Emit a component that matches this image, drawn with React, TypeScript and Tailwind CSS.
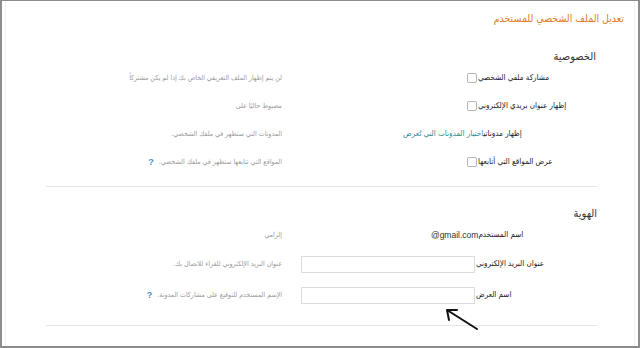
import React from 'react';

const font = { fontFamily: '"Liberation Sans", "DejaVu Sans Condensed", "DejaVu Sans", sans-serif' };

function Checkbox() {
  return (
    <span className="inline-block h-[10px] w-[10px] shrink-0 rounded-[2px] border border-[#b5b5b5] bg-white" />
  );
}

function Help() {
  return (
    <span className="inline-block text-[9px] font-bold leading-none text-[#4a8fd0]">?</span>
  );
}

function Row({
  desc,
  help,
  height = 'h-[28px]',
  children,
}: {
  desc: string;
  help?: boolean;
  height?: string;
  children: React.ReactNode;
}) {
  return (
    <div className={`flex items-center ${height}`}>
      <div className="flex w-[236px] items-center justify-end text-[7px] text-[#9a9a9a]">
        {help && <Help />}
        <span dir="rtl" className="ml-[5px]">{desc}</span>
      </div>
      <div className="ml-[19px] flex flex-1 items-center">{children}</div>
    </div>
  );
}

export default function App() {
  return (
    <div
      className="relative h-[348px] w-[640px] overflow-hidden border-t border-r-2 border-b-2 border-l-2 border-[#8c8c8c] bg-white font-stretch-condensed"
      style={font}
    >
      <div className="mx-[3px] h-full border-x border-[#f2f2f2]">
        <div dir="rtl" className="pt-[9px] pr-[10px] text-[10.5px] leading-[16px] text-[#e07a26]">
          تعديل الملف الشخصي للمستخدم
        </div>

        <div className="ml-[40px] mr-[37px]">
          <div dir="rtl" className="mt-[22px] pr-[1px] text-[11px] leading-[16px] text-[#333]">
            الخصوصية
          </div>

          <Row desc="لن يتم إظهار الملف التعريفي الخاص بك إذا لم يكن مشتركاً">
            <span className="ml-[166px] flex items-center text-[8px] text-[#222]">
              <Checkbox />
              <span dir="rtl" className="ml-[1px]">مشاركة ملفي الشخصي</span>
            </span>
          </Row>
          <Row desc="مضبوط حاليًا على">
            <span className="ml-[166px] flex items-center text-[8px] text-[#222]">
              <Checkbox />
              <span dir="rtl" className="ml-[1px]">إظهار عنوان بريدي الإلكتروني</span>
            </span>
          </Row>
          <Row desc="المدونات التي ستظهر في ملفك الشخصي.">
            <span dir="rtl" className="ml-[102px] text-[8px] text-[#222]">
              إظهار مدوناتي
              <a className="text-[#2a8a96]">اختيار المدونات التي تُعرض</a>
            </span>
          </Row>
          <Row desc="المواقع التي تتابعها ستظهر في ملفك الشخصي." help>
            <span className="ml-[166px] flex items-center text-[8px] text-[#222]">
              <Checkbox />
              <span dir="rtl" className="ml-[1px]">عرض المواقع التي أتابعها</span>
            </span>
          </Row>

          <div className="mt-[10px] border-t border-[#e6e6e6]" />

          <div dir="rtl" className="mt-[18px] text-[11px] leading-[16px] text-[#333]">
            الهوية
          </div>

          <Row desc="إلزامي">
            <span className="ml-[130px] flex items-center text-[8px] text-[#222]">
              <span className="text-[8.5px] text-[#333]">@gmail.com</span>
              <span dir="rtl">اسم المستخدم</span>
            </span>
          </Row>
          <Row desc="عنوان البريد الإلكتروني للقراء للاتصال بك." height="h-[30px]">
            <span className="flex items-center text-[8px] text-[#222]">
              <span className="block h-[17px] w-[174px] border border-[#dcdcdc] bg-white" />
              <span dir="rtl" className="ml-[1px]">عنوان البريد الإلكتروني</span>
            </span>
          </Row>
          <Row desc="الإسم المستخدم للتوقيع على مشاركات المدونة." help height="h-[32px]">
            <span className="flex items-center text-[8px] text-[#222]">
              <span className="block h-[17px] w-[174px] border border-[#dcdcdc] bg-white" />
              <span dir="rtl" className="ml-[1px]">اسم العرض</span>
            </span>
          </Row>

          <div className="mt-[14px] border-t border-[#e6e6e6]" />
        </div>
      </div>

      <svg
        className="absolute left-[440px] top-[304px]"
        width="40"
        height="30"
        viewBox="0 0 40 30"
        fill="none"
        stroke="#111"
        strokeWidth="2"
        strokeLinecap="round"
      >
        <path d="M35 24 L5 5 M5 5 L15 5 M5 5 L7 15" />
      </svg>
    </div>
  );
}
